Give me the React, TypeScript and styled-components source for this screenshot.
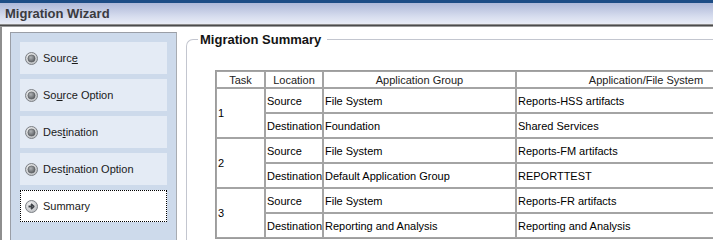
import React from 'react'
import styled, { createGlobalStyle } from 'styled-components'

const GlobalStyle = createGlobalStyle`
  html, body {
    margin: 0;
    padding: 0;
    background: #ffffff;
    overflow: hidden;
  }
  body {
    font-family: "Liberation Sans", Arial, sans-serif;
    font-size: 11px;
    color: #000;
  }
`

interface Step {
  label: string
  mnemonic: number
  current?: boolean
}

const steps: Step[] = [
  { label: 'Source', mnemonic: 5 },
  { label: 'Source Option', mnemonic: 2 },
  { label: 'Destination', mnemonic: 3 },
  { label: 'Destination Option', mnemonic: 4 },
  { label: 'Summary', mnemonic: -1, current: true },
]

interface Task {
  id: number
  source: [string, string]
  destination: [string, string]
}

const tasks: Task[] = [
  { id: 1, source: ['File System', 'Reports-HSS artifacts'], destination: ['Foundation', 'Shared Services'] },
  { id: 2, source: ['File System', 'Reports-FM artifacts'], destination: ['Default Application Group', 'REPORTTEST'] },
  { id: 3, source: ['File System', 'Reports-FR artifacts'], destination: ['Reporting and Analysis', 'Reporting and Analysis'] },
]

const RadioIcon = ({ current }: { current?: boolean }) => (
  <svg width="13" height="13" viewBox="0 0 13 13">
    <defs>
      <radialGradient id="ring" cx="40%" cy="35%" r="70%">
        <stop offset="0%" stopColor="#f4f4f4" />
        <stop offset="100%" stopColor="#b9bcc0" />
      </radialGradient>
      <radialGradient id="dot" cx="40%" cy="35%" r="65%">
        <stop offset="0%" stopColor="#b0b3b6" />
        <stop offset="100%" stopColor="#5d6064" />
      </radialGradient>
    </defs>
    <circle cx="6.5" cy="6.5" r="6" fill="url(#ring)" stroke="#7d8186" strokeWidth="1" />
    {current ? (
      <path d="M3.5 6.5 H7 M6 4 L8.7 6.5 L6 9" fill="none" stroke="#3f4348" strokeWidth="1.8" strokeLinejoin="round" />
    ) : (
      <circle cx="6.5" cy="6.5" r="3.6" fill="url(#dot)" stroke="#56595d" strokeWidth="0.6" />
    )}
  </svg>
)

const Mnemonic = ({ text, index }: { text: string; index: number }) => {
  if (index < 0) return <>{text}</>
  return (
    <>
      {text.slice(0, index)}
      <u>{text[index]}</u>
      {text.slice(index + 1)}
    </>
  )
}

export default function App() {
  return (
    <>
      <GlobalStyle />
      <Window>
        <TitleBar>Migration Wizard</TitleBar>
        <Body>
          <Sidebar>
            {steps.map(s => (
              <StepItem key={s.label} $current={s.current}>
                <RadioIcon current={s.current} />
                <span>
                  <Mnemonic text={s.label} index={s.mnemonic} />
                </span>
              </StepItem>
            ))}
          </Sidebar>
          <Summary>
            <Legend>Migration Summary</Legend>
            <Table>
              <colgroup>
                <col style={{ width: 49 }} />
                <col style={{ width: 58 }} />
                <col style={{ width: 193 }} />
                <col style={{ width: 260 }} />
              </colgroup>
              <thead>
                <tr>
                  <Th>Task</Th>
                  <Th>Location</Th>
                  <Th>Application Group</Th>
                  <Th>Application/File System</Th>
                </tr>
              </thead>
              <tbody>
                {tasks.map(t => (
                  <React.Fragment key={t.id}>
                    <tr>
                      <Td rowSpan={2}>{t.id}</Td>
                      <Td>Source</Td>
                      <Td>{t.source[0]}</Td>
                      <Td>{t.source[1]}</Td>
                    </tr>
                    <tr>
                      <Td>Destination</Td>
                      <Td>{t.destination[0]}</Td>
                      <Td>{t.destination[1]}</Td>
                    </tr>
                  </React.Fragment>
                ))}
              </tbody>
            </Table>
          </Summary>
        </Body>
      </Window>
    </>
  )
}

const Window = styled.div`
  width: 713px;
  height: 240px;
  display: flex;
  flex-direction: column;
  border-top: 3px solid #1d4d86;
  box-sizing: border-box;
  overflow: hidden;
`

const TitleBar = styled.div`
  height: 20px;
  flex: none;
  padding-left: 5px;
  display: flex;
  align-items: center;
  font-size: 13px;
  font-weight: bold;
  color: #3b3b40;
  background: linear-gradient(#aeb9d9 0%, #c3cbe4 35%, #d8deef 70%, #e6eaf5 100%);
  border-bottom: 1px solid #e8ebf4;
  box-shadow: 0 1px 0 #8d8d8d, 0 2px 0 #4b4b4b, 0 3px 0 #9a9a9a;
  margin-bottom: 3px;
`

const Body = styled.div`
  flex: 1;
  display: flex;
  align-items: stretch;
  border-left: 2px solid #8e8e8e;
  padding: 5px 0 0 8px;
  gap: 9px;
  min-height: 0;
`

const Sidebar = styled.div`
  width: 147px;
  flex: none;
  background: #cddaeb;
  border: 1px solid #9a9ea6;
  border-bottom: none;
  border-right-color: #a8acb2;
  padding: 9px 9px 0 9px;
  display: flex;
  flex-direction: column;
  gap: 5px;
`

const StepItem = styled.div<{ $current?: boolean }>`
  height: 32px;
  box-sizing: border-box;
  display: flex;
  align-items: center;
  gap: 5px;
  padding-left: 4px;
  background: ${p => (p.$current ? '#ffffff' : '#e4ebf5')};
  border: ${p => (p.$current ? '1px dotted #000' : '1px solid #e4ebf5')};
  color: #1a1a1a;
  font-size: 11px;

  svg {
    flex: none;
  }
`

const Summary = styled.fieldset`
  flex: 1;
  margin: 0;
  padding: 23px 0 0 11px;
  border: 1px solid #c3c6cf;
  border-right: none;
  border-bottom: none;
  border-top-left-radius: 7px;
  min-width: 0;
  overflow: visible;
`

const Legend = styled.legend`
  margin-left: 0;
  padding: 0 6px 0 2px;
  font-size: 13px;
  font-weight: bold;
  color: #141414;
  line-height: 15px;
`

const Table = styled.table`
  table-layout: fixed;
  width: 562px;
  border-collapse: separate;
  border-spacing: 0;
  border: 1px solid #9c9c9c;
  margin-left: 17px;
`

const Th = styled.th`
  height: 15px;
  padding: 0 2px;
  font-weight: normal;
  text-align: center;
  border: 1px solid #a4a4a4;
  color: #222;
  white-space: nowrap;
`

const Td = styled.td`
  height: 23px;
  padding: 0 1px;
  text-align: left;
  vertical-align: middle;
  border: 1px solid #a4a4a4;
  white-space: nowrap;
`
